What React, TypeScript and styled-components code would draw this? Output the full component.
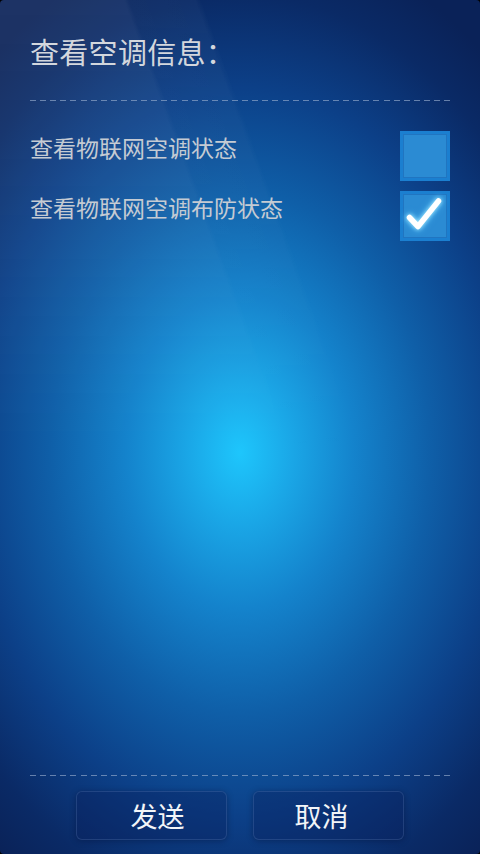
import React, { useState } from "react";
import styled, { createGlobalStyle } from "styled-components";

const Global = createGlobalStyle`
  html, body { margin: 0; padding: 0; background: #000; }
  body { font-family: "Noto Sans CJK SC", "Noto Sans", sans-serif; }
  * { box-sizing: border-box; }
`;

const Screen = styled.div`
  position: relative;
  width: 480px;
  height: 854px;
  overflow: hidden;
  border-radius: 4px;
  display: flex;
  flex-direction: column;
  padding: 0 30px 14px;
  background: radial-gradient(
    ellipse 380px 520px at 50% 53%,
    #1ec6fc 0%,
    #1aa6e6 14%,
    #1483cc 30%,
    #0f5fa8 50%,
    #0c4088 70%,
    #0a2a66 88%,
    #0a2258 100%
  );
  &::before {
    content: "";
    position: absolute;
    left: 0;
    top: 0;
    width: 480px;
    height: 460px;
    pointer-events: none;
    background: linear-gradient(
      70deg,
      rgba(255, 255, 255, 0.08) 0%,
      rgba(255, 255, 255, 0.08) 45%,
      rgba(255, 255, 255, 0.045) 45.8%,
      rgba(255, 255, 255, 0.035) 56%,
      rgba(255, 255, 255, 0) 57%
    );
    -webkit-mask-image: linear-gradient(to bottom, #000 0%, rgba(0,0,0,0.6) 50%, transparent 100%);
    mask-image: linear-gradient(to bottom, #000 0%, rgba(0,0,0,0.6) 50%, transparent 100%);
  }
`;

const Title = styled.h1`
  position: relative;
  margin: 37px 0 0;
  font-size: 29px;
  line-height: 1;
  font-weight: 400;
  color: #d3d7dd;
  letter-spacing: 0.3px;
`;

const Dashed = styled.div<{ $top: number }>`
  position: relative;
  height: 1px;
  margin-top: ${(p) => p.$top}px;
  background: repeating-linear-gradient(
    to right,
    rgba(150, 172, 205, 0.65) 0 6px,
    transparent 6px 10.1px
  );
`;

const List = styled.div`
  position: relative;
  display: flex;
  flex-direction: column;
  gap: 10px;
  margin-top: 30px;
`;

const Row = styled.label`
  display: flex;
  justify-content: space-between;
  align-items: flex-start;
  cursor: pointer;
`;

const Label = styled.span`
  padding-top: 5px;
  font-size: 23px;
  line-height: 1;
  color: #c5cbd3;
`;

const Box = styled.span`
  width: 50px;
  height: 50px;
  display: flex;
  align-items: center;
  justify-content: center;
  background: #2b8bd3;
  border: 3px solid #1b7fd0;
  box-shadow: inset 0 0 0 1px rgba(20, 90, 170, 0.45);
`;

const Check = styled.svg`
  width: 44px;
  height: 44px;
  filter: drop-shadow(0 0 2px rgba(180, 240, 255, 0.95)) drop-shadow(0 0 3px rgba(90, 200, 255, 0.8));
`;

const Footer = styled.div`
  position: relative;
  margin-top: auto;
  display: flex;
  flex-direction: column;
`;

const Buttons = styled.div`
  display: flex;
  justify-content: center;
  gap: 26px;
  margin-top: 15px;
`;

const Button = styled.button<{ $shift: number }>`
  width: 151px;
  height: 49px;
  padding: 0 0 0 ${(p) => Math.max(0, p.$shift * 2)}px;
  padding-right: ${(p) => Math.max(0, -p.$shift * 2)}px;
  border-radius: 6px;
  border: 1px solid rgba(120, 150, 200, 0.22);
  background: rgba(8, 30, 90, 0.35);
  box-shadow: 0 1px 6px rgba(0, 10, 40, 0.35);
  color: #f2f5f8;
  font-family: "Noto Sans CJK SC", "Noto Sans", sans-serif;
  font-size: 27px;
  line-height: 1;
  cursor: pointer;
`;

const items = [
  { label: "查看物联网空调状态", checked: false },
  { label: "查看物联网空调布防状态", checked: true },
];

export default function App() {
  const [state, setState] = useState(items.map((i) => i.checked));
  return (
    <>
      <Global />
      <Screen>
        <Title>查看空调信息：</Title>
        <Dashed $top={34} />
        <List>
          {items.map((it, i) => (
            <Row
              key={it.label}
              onClick={() => setState((s) => s.map((v, j) => (j === i ? !v : v)))}
            >
              <Label>{it.label}</Label>
              <Box>
                {state[i] && (
                  <Check viewBox="0 0 44 44">
                    <path
                      d="M6.5 23.5 L15 32.5 L35.5 7"
                      fill="none"
                      stroke="#ffffff"
                      strokeWidth="5.5"
                      strokeLinecap="round"
                      strokeLinejoin="round"
                    />
                  </Check>
                )}
              </Box>
            </Row>
          ))}
        </List>
        <Footer>
          <Dashed $top={0} />
          <Buttons>
            <Button $shift={6}>发送</Button>
            <Button $shift={-7}>取消</Button>
          </Buttons>
        </Footer>
      </Screen>
    </>
  );
}
